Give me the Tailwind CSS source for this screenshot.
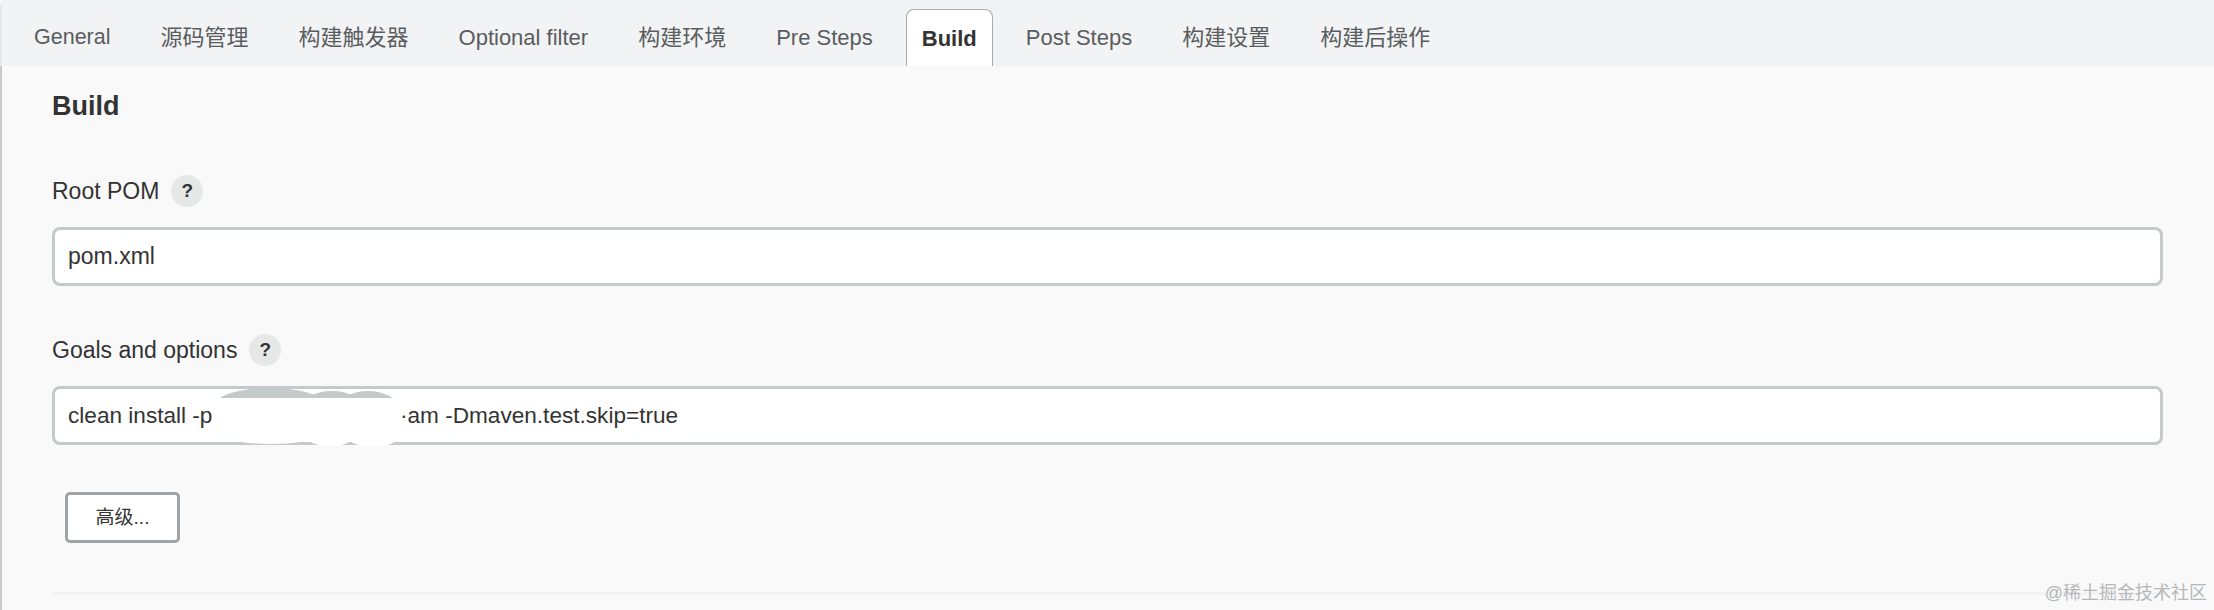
<!DOCTYPE html>
<html lang="en">
  <head>
    <meta charset="UTF-8" />
    <title>Build</title>
    <script src="https://cdn.jsdelivr.net/npm/@tailwindcss/browser@4"></script>
  </head>
  <body class="bg-[#f9f9fa] font-['Liberation_Sans','Noto_Sans_CJK_SC',sans-serif]">
    <div class="relative h-[610px] w-[2214px] overflow-hidden">
      <!-- tabs -->
      <div class="flex h-[66px] items-end gap-4 rounded-tl-lg border-l-2 border-[#e6e7e7] bg-[#f2f3f4] pl-[15px] text-[22px] text-[#5a5d60]">
        <div class="flex h-[57px] items-center px-[17px] text-[21.5px]">General</div>
        <div class="flex h-[57px] items-center px-[17px]">源码管理</div>
        <div class="flex h-[57px] items-center px-[17px]">构建触发器</div>
        <div class="flex h-[57px] items-center px-[17px]">Optional filter</div>
        <div class="flex h-[57px] items-center px-[17px]">构建环境</div>
        <div class="flex h-[57px] items-center px-[17px]">Pre Steps</div>
        <div class="flex h-[57px] items-center rounded-t-lg border border-b-0 border-[#a9abad] bg-white px-[15px] font-bold text-[#333]">Build</div>
        <div class="flex h-[57px] items-center px-[17px]">Post Steps</div>
        <div class="flex h-[57px] items-center px-[17px]">构建设置</div>
        <div class="flex h-[57px] items-center px-[17px]">构建后操作</div>
      </div>

      <!-- build section -->
      <div class="h-[544px] border-l-2 border-[#c9cbcc] pr-[51px] pl-[50px] text-[#333]">
        <h2 class="pt-6 text-[27px] leading-8 font-bold">Build</h2>

        <div class="mt-[53px] flex h-8 items-center gap-3 text-[23px]">
          <span>Root POM</span>
          <span class="flex size-8 items-center justify-center rounded-full bg-[#e6e7e7] text-[19px] font-bold">?</span>
        </div>
        <div class="mt-5 flex h-[59px] items-center rounded-lg border-[3px] border-[#c5c9ca] bg-white pl-[13px] text-[23px]">pom.xml</div>

        <div class="mt-12 flex h-8 items-center gap-3 text-[23px]">
          <span>Goals and options</span>
          <span class="flex size-8 items-center justify-center rounded-full bg-[#e6e7e7] text-[19px] font-bold">?</span>
        </div>
        <div class="relative mt-5 flex h-[59px] items-center rounded-lg border-[3px] border-[#c5c9ca] bg-white pl-[13px] text-[22.6px]">
          <span class="w-[332px] shrink-0">clean install -p</span>
          <span>·am -Dmaven.test.skip=true</span>
          <!-- redacted part of the value -->
          <svg class="absolute top-[-3px] left-[161px]" width="184" height="62" viewBox="-4 0 184 62">
            <ellipse cx="50" cy="18" rx="54" ry="16" fill="#c5c9ca" />
            <ellipse cx="112" cy="20" rx="30" ry="15" fill="#c5c9ca" />
            <ellipse cx="148" cy="20" rx="29" ry="15" fill="#c5c9ca" />
            <rect x="-4" y="12" width="184" height="42" fill="#ffffff" />
            <ellipse cx="51" cy="52" rx="40" ry="6" fill="#ffffff" />
            <ellipse cx="110" cy="52" rx="22" ry="8" fill="#ffffff" />
            <ellipse cx="153" cy="52" rx="24" ry="9" fill="#ffffff" />
          </svg>
        </div>

        <button class="mt-[47px] ml-[13px] block h-[51px] w-[115px] rounded-[5px] border-[3px] border-[#a0a3a5] bg-white pt-[2px] text-[19px] text-[#333]">高级...</button>

        <div class="mt-[49px] h-[3px] bg-[#f2f3f4]"></div>
      </div>

      <!-- watermark -->
      <div class="absolute top-[581px] right-[7px] text-[18px] leading-6 text-[#b5b7b8]">@稀土掘金技术社区</div>
    </div>
  </body>
</html>
